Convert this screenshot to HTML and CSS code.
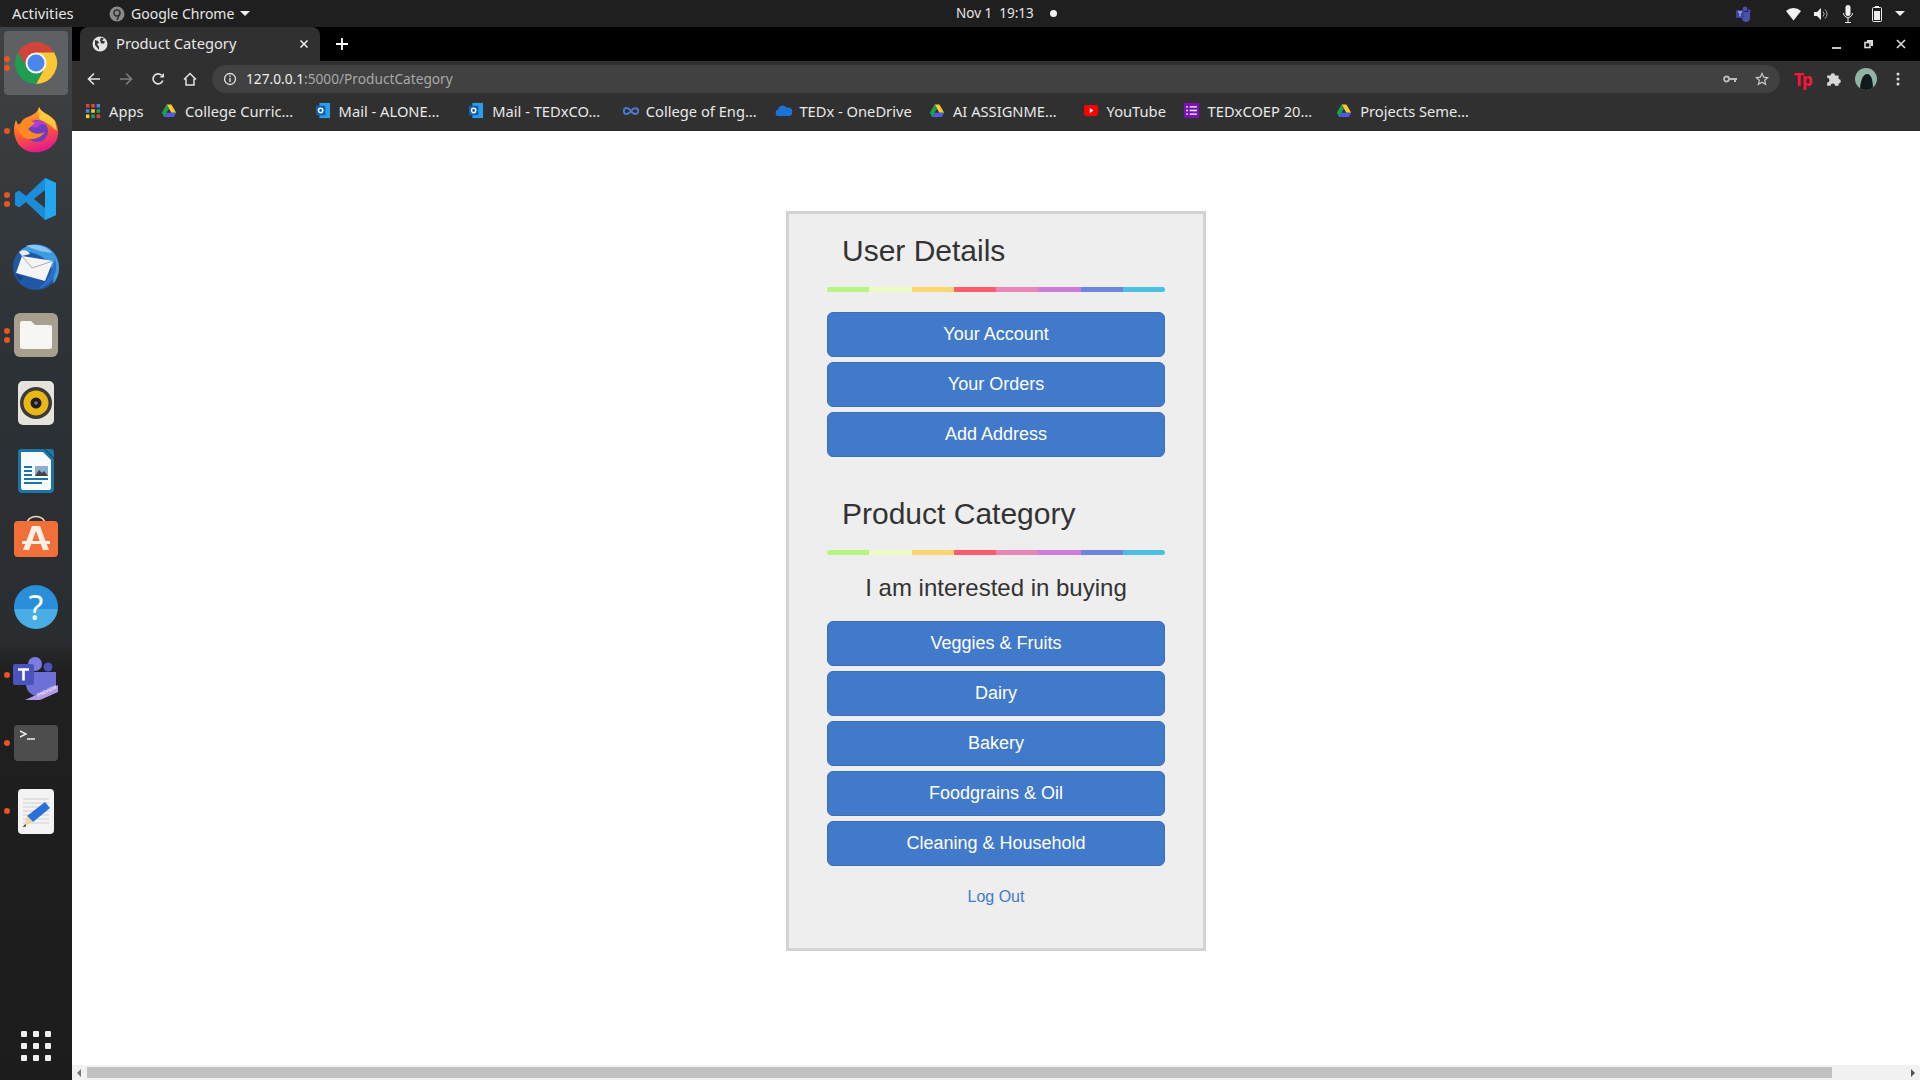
FILE: index.html
```html
<!DOCTYPE html>
<html lang="en">
<head>
    <meta charset="UTF-8">
    <title>Product Category</title>
    <link rel="stylesheet" href="styles.css">
</head>
<body>
    <!-- Ubuntu top bar -->
    <header class="topbar">
        <div class="topbar-left">
            <span class="activities">Activities</span>
            <span class="app-menu">
                <svg class="app-icon" width="16" height="16" viewBox="0 0 16 16"><circle cx="8" cy="8" r="7.5" fill="#8a8a8a"/><circle cx="8" cy="7" r="3" fill="none" stroke="#333" stroke-width="1.6"/><path d="M10.5 8 8 14" stroke="#333" stroke-width="1.6"/></svg>
                Google Chrome
                <i class="caret"></i>
            </span>
        </div>
        <div class="clock">Nov 1&nbsp; 19:13 <i class="clock-dot"></i></div>
        <div class="tray">
            <svg class="tray-teams" width="16" height="16" viewBox="0 0 16 16"><circle cx="10" cy="3" r="2.4" fill="#4a4fb0"/><circle cx="14" cy="5" r="1.8" fill="#3f44a0"/><path d="M6 6h9v5a4 4 0 0 1-8 2z" fill="#4a4fb0"/><rect x="1" y="4" width="8" height="8" rx="1" fill="#3f44a0"/><path d="M3 6h4M5 6v4.5" stroke="#ccd"/></svg>
            <svg class="tray-wifi" width="15" height="14" viewBox="0 0 15 14"><path d="M0 4a11 11 0 0 1 15 0L7.500 13.500z" fill="#f4f4f4"/></svg>
            <svg class="tray-sound" width="14" height="14" viewBox="0 0 14 14"><path d="M0 5h3l4-4v12l-4-4H0z" fill="#eee"/><path d="M9 4.500a3.500 3.500 0 0 1 0 5M11 2.500a6 6 0 0 1 0 9" fill="none" stroke="#aaa"/></svg>
            <svg class="tray-mic" width="12" height="18" viewBox="0 0 12 18"><rect x="3.500" y="0" width="5" height="11" rx="2.500" fill="#f2f2f2"/><path d="M1.500 8a4.500 4.500 0 0 0 9 0M6 13v4M3 17.500h6" fill="none" stroke="#f2f2f2"/></svg>
            <svg class="tray-battery" width="10" height="16" viewBox="0 0 10 16"><rect x="3" y="0" width="4" height="2" fill="#eee"/><rect x="0.500" y="1.500" width="9" height="14" rx="1" fill="none" stroke="#eee"/><rect x="2" y="5" width="6" height="9" fill="#eee"/></svg>
            <i class="caret"></i>
        </div>
    </header>

    <div class="desktop">
        <!-- Dock -->
        <aside class="dock">
            <div class="dock-item active">
                <span class="pips"><i></i><i></i></span>
                <svg width="44" height="44" viewBox="0 0 44 44"><path d="M3.900 11.500A21 21 0 0 1 40.200 11.500H22L13.300 27z" fill="#d2443a"/><path d="M40.200 11.500A21 21 0 0 1 22 43L30.700 27 22 11.500z" fill="#fbc735"/><path d="M22 43A21 21 0 0 1 3.900 11.500L13.300 27H30.700z" fill="#1f9e52"/><circle cx="22" cy="22" r="10.500" fill="#f4f4f4"/><circle cx="22" cy="22" r="8.500" fill="#4a86ec"/></svg>
            </div>
            <div class="dock-item">
                <span class="pips"><i></i></span>
                <svg class="icon-firefox" width="46" height="46" viewBox="0 0 46 46"><defs><linearGradient id="fx" x1="0.200" y1="0" x2="0.500" y2="1"><stop offset="0" stop-color="#ffb52e"/><stop offset="0.550" stop-color="#ff5e30"/><stop offset="1" stop-color="#e5198c"/></linearGradient></defs><path d="M26 0c2 6 11 7 16 14 5 8 4 19-2 24-8 9-25 10-33 1C0 31 0 20 3 13c1 3 2 5 4 6 1-5 4-8 8-9 4-2 10-4 11-10z" fill="url(#fx)"/><path d="M26 0c2 6 11 7 16 14l2 10c-6-5-10-9-17-11C25 9 25 4 26 0z" fill="#ffc83a"/><circle cx="24" cy="24" r="11" fill="#6d3ec1"/><path d="M14 19c5-7 16-7 21 0-6-3-9-1-11 2z" fill="#b23bd0"/><path d="M3 20c5-6 14-8 19-4l-7 6c4 5 11 6 17 3-5 7-16 10-23 4z" fill="#ff8a1f"/></svg>
            </div>
            <div class="dock-item">
                <span class="pips"><i></i><i></i></span>
                <svg width="44" height="44" viewBox="0 0 44 44"><path d="M31 1 42 6v32l-11 5-19-18-7 5.500L1 28v-12l4-2.500 7 5.500zM31 13 20 22l11 9z" fill="#1b8cd8"/><path d="M31 1 42 6v32l-11 5z" fill="#25a7f0"/></svg>
            </div>
            <div class="dock-item">
                <svg width="48" height="48" viewBox="0 0 48 48"><circle cx="24" cy="24" r="23" fill="#2058a8"/><path d="M8 8C18-2 38 0 45 15c4 10 2 19-4 26 1-9 0-17-6-23C28 11 18 8 8 8z" fill="#3f9be0"/><path d="M14 3c8-3 20-1 26 7l-12-2c-5-2-10-3-14-5z" fill="#8cc6ee"/><path d="M7 9c4-3 9-2 11 2l-8 2z" fill="#e8f0f6"/><path d="M10 13 41 18 33 38 4 30z" fill="#f4f4f4"/><path d="M10 13 20 25 41 18" fill="none" stroke="#99a" stroke-width="0.800"/><path d="M43 16c3 9 0 19-6 24-3 3-7 5-11 6 4-4 8-6 10-11 3-5 5-12 7-19z" fill="#2c6fc6"/><path d="M4 30 12 35 7 38C5 36 4 33 4 30z" fill="#1a4688"/></svg>
            </div>
            <div class="dock-item">
                <span class="pips"><i></i><i></i></span>
                <svg width="44" height="44" viewBox="0 0 44 44"><rect width="44" height="44" rx="6" fill="#a8a08f"/><path d="M6 10a2 2 0 0 1 2-2h9l4 4h15a2 2 0 0 1 2 2v20a2 2 0 0 1-2 2H8a2 2 0 0 1-2-2z" fill="#f8f6f3"/></svg>
            </div>
            <div class="dock-item">
                <svg width="36" height="44" viewBox="0 0 36 44"><rect width="36" height="44" rx="5" fill="#e6e3dc"/><circle cx="18" cy="22" r="16" fill="#3a3a3a"/><circle cx="18" cy="22" r="12.500" fill="#e9b816"/><circle cx="18" cy="22" r="5.500" fill="#1e1e1e"/><circle cx="18" cy="22" r="1.800" fill="#777"/></svg>
            </div>
            <div class="dock-item">
                <svg width="36" height="44" viewBox="0 0 36 44"><path d="M3 0h23l10 10v30a4 4 0 0 1-4 4H4a4 4 0 0 1-4-4V3a3 3 0 0 1 3-3z" fill="#1b75a8"/><path d="M3 3h22l8 8v28a2 2 0 0 1-2 2H5a2 2 0 0 1-2-2z" fill="#f7fbfd"/><path d="M27 0h6a3 3 0 0 1 3 3v6z" fill="#1b75a8"/><path d="M6 18h8M6 22h8M6 26h8M6 30h24M6 34h18" stroke="#1b75a8" stroke-width="2"/><rect x="17" y="17" width="13" height="10" fill="#8bb0cf"/><path d="M17 27l4-6 3 3 2-2 4 5z" fill="#444"/></svg>
            </div>
            <div class="dock-item">
                <svg width="44" height="48" viewBox="0 0 44 48"><path d="M13 9C13-1 31-1 31 9" fill="none" stroke="#e9d7b8" stroke-width="1.500"/><rect y="6" width="44" height="36" rx="4" fill="#f1703a"/><path d="M18 11h8l9 24h-6l-7-19-7 19H9z" fill="#fbeee6"/><path d="M8 26h28v3H8z" fill="#fbeee6"/></svg>
            </div>
            <div class="dock-item">
                <span class="help-icon">?</span>
            </div>
            <div class="dock-item">
                <span class="pips"><i></i></span>
                <svg class="icon-teams" width="48" height="44" viewBox="0 0 48 44"><circle cx="23" cy="8" r="7" fill="#7b7de0"/><circle cx="36" cy="11" r="4.500" fill="#4c52bc"/><path d="M14 16h30v12a12 12 0 0 1-12 12h-6a12 12 0 0 1-12-12z" fill="#6e70d8"/><rect x="1" y="8" width="21" height="21" rx="2" fill="#4b53bc"/><path d="M6 13.500h11M11.500 13.500v11" stroke="#fff" stroke-width="2.600"/><path d="M13 44 46 29v7L28 44z" fill="#b39ae6"/><text class="preview-mark" x="26" y="41" transform="rotate(-25 26 41)">PREVIEW</text></svg>
            </div>
            <div class="dock-item">
                <span class="pips"><i></i></span>
                <svg width="44" height="36" viewBox="0 0 44 36"><rect width="44" height="36" rx="4" fill="#4d4d4d"/><path d="M6 6 12 9 6 12M13 14h8" fill="none" stroke="#eee" stroke-width="1.400"/></svg>
            </div>
            <div class="dock-item">
                <span class="pips"><i></i></span>
                <svg width="36" height="45" viewBox="0 0 36 45"><rect width="36" height="45" rx="4" fill="#f3f3f3"/><path d="M5 10h26M5 14h26M5 18h26M5 22h26M5 26h26M5 30h26M5 34h26" stroke="#cfcfcf"/><path d="M27 13 32 19 15 33 9 27z" fill="#2b6fd8"/><path d="M9 27 15 33 6 37z" fill="#f3d2a6"/><path d="M4.500 38 7.500 35 8 37.500z" fill="#333"/></svg>
            </div>
            <div class="app-grid">
                <i></i><i></i><i></i><i></i><i></i><i></i><i></i><i></i><i></i>
            </div>
        </aside>

        <!-- Chrome window -->
        <div class="browser">
            <div class="tabstrip">
                <div class="tab">
                    <svg width="16" height="16" viewBox="0 0 16 16"><circle cx="8" cy="8" r="7.500" fill="#e4e4e4"/><path d="M3 4l3 1 1 2-2 1 2 3v3L3 9zM9 1.500l3 1-2 2 3 1-1 2h-3L8 4z" fill="#353535"/></svg>
                    <span class="tab-title">Product Category</span>
                    <svg class="tab-close" width="10" height="10" viewBox="0 0 10 10"><path d="M1.500 1.500l7 7M8.500 1.500l-7 7" stroke="#eee" stroke-width="1.500"/></svg>
                </div>
                <svg class="new-tab" width="12" height="12" viewBox="0 0 12 12"><path d="M6 0v12M0 6h12" stroke="#fff" stroke-width="1.800"/></svg>
                <div class="window-controls">
                    <svg width="10" height="10" viewBox="0 0 10 10"><path d="M0 9h9" stroke="#ddd" stroke-width="1.800"/></svg>
                    <svg width="10" height="10" viewBox="0 0 10 10"><path d="M3 1h6v6H7V3H3z" fill="#ddd"/><rect x="1" y="3.500" width="5" height="5" fill="none" stroke="#ddd" stroke-width="1.600"/></svg>
                    <svg width="10" height="10" viewBox="0 0 10 10"><path d="M1 1l8 8M9 1l-8 8" stroke="#ddd" stroke-width="1.600"/></svg>
                </div>
            </div>

            <div class="toolbar">
                <svg class="nav-icon" width="14" height="14" viewBox="0 0 14 14"><path d="M13 7H2M7 1.500 1.500 7 7 12.500" fill="none" stroke="#e2e2e2" stroke-width="1.600"/></svg>
                <svg class="nav-icon" width="14" height="14" viewBox="0 0 14 14"><path d="M1 7h11M7 1.500 12.500 7 7 12.500" fill="none" stroke="#7e7e7e" stroke-width="1.600"/></svg>
                <svg class="nav-icon" width="14" height="14" viewBox="0 0 14 14"><path d="M11.800 8.500A5 5 0 1 1 10.500 3.200" fill="none" stroke="#e2e2e2" stroke-width="1.600"/><path d="M8.500 5.500H13V1z" fill="#e2e2e2"/></svg>
                <svg class="nav-icon" width="14" height="14" viewBox="0 0 14 14"><path d="M1 7.500 7 1.500l6 6M3 6.500V13h8V6.500" fill="none" stroke="#e2e2e2" stroke-width="1.500"/></svg>
                <div class="omnibox">
                    <svg width="14" height="14" viewBox="0 0 14 14"><circle cx="7" cy="7" r="5.500" fill="none" stroke="#e2e2e2" stroke-width="1.300"/><path d="M7 6v4M7 3.500v1.500" stroke="#e2e2e2" stroke-width="1.400"/></svg>
                    <span class="url"><b>127.0.0.1</b>:5000/ProductCategory</span>
                    <svg class="omni-key" width="14" height="10" viewBox="0 0 14 10"><circle cx="3.500" cy="5" r="2.500" fill="none" stroke="#bbb" stroke-width="1.800"/><path d="M6 4h8v2h-1v2h-2V6H6z" fill="#bbb"/></svg>
                    <svg class="omni-star" width="14" height="14" viewBox="0 0 14 14"><path d="M7 1.500 8.700 5.200l4 .4-3 2.700.9 4L7 10.200l-3.600 2.100.9-4-3-2.700 4-.4z" fill="none" stroke="#ccc" stroke-width="1.200"/></svg>
                </div>
                <div class="toolbar-right">
                    <span class="tp-badge">Tp</span>
                    <svg class="ext-puzzle" width="16" height="16" viewBox="0 0 14 14"><path d="M1 4h3a2 2 0 0 1 4 0h3v3a2 2 0 0 1 0 4v2H8a2 2 0 0 0-4 0H1v-3a2 2 0 0 0 0-4z" fill="#d8d8d8"/></svg>
                    <svg class="profile" width="22" height="22" viewBox="0 0 22 22"><defs><clipPath id="avatar"><circle cx="11" cy="11" r="11"/></clipPath></defs><g clip-path="url(#avatar)"><rect width="22" height="22" fill="#8fb3a5"/><path d="M5 22c0-6 2-16 7-16s6 8 6 16z" fill="#10191c"/></g></svg>
                    <svg class="chrome-menu" width="4" height="14" viewBox="0 0 4 14"><circle cx="2" cy="2" r="1.500" fill="#ddd"/><circle cx="2" cy="7" r="1.500" fill="#ddd"/><circle cx="2" cy="12" r="1.500" fill="#ddd"/></svg>
                </div>
            </div>

            <nav class="bookmarks">
                <a class="bookmark bm-apps"><svg width="12" height="12" viewBox="0 0 12 12"><path d="M0 0h3v3H0z" fill="#e0433a"/><path d="M4.500 0h3v3h-3z" fill="#e0433a"/><path d="M9 0h3v3H9z" fill="#4a86ec"/><path d="M0 4.500h3v3H0z" fill="#4a86ec"/><path d="M4.500 4.500h3v3h-3z" fill="#fbc735"/><path d="M9 4.500h3v3H9z" fill="#1f9e52"/><path d="M0 9h3v3H0z" fill="#fbc735"/><path d="M4.500 9h3v3h-3z" fill="#1f9e52"/><path d="M9 9h3v3H9z" fill="#e0433a"/></svg>Apps</a>
                <a class="bookmark bm-wide"><svg width="12" height="12" viewBox="0 0 12 12"><path d="M4 .500h4l4 7H8z" fill="#fbc735"/><path d="M4 .500 0 7.500l2 3.500 4-7z" fill="#1f9e52"/><path d="M2 11h8l2-3.500H4z" fill="#4a5fe0"/></svg>College Curric…</a>
                <a class="bookmark bm-wide"><svg width="12" height="13" viewBox="0 0 12 13"><rect x="3" y="0" width="9" height="13" fill="#2b9ee8"/><rect x="0" y="2.500" width="8" height="8" fill="#0f5fb8"/><circle cx="4" cy="6.500" r="1.800" fill="none" stroke="#fff" stroke-width="1.200"/></svg>Mail - ALONE…</a>
                <a class="bookmark bm-wide"><svg width="12" height="13" viewBox="0 0 12 13"><rect x="3" y="0" width="9" height="13" fill="#2b9ee8"/><rect x="0" y="2.500" width="8" height="8" fill="#0f5fb8"/><circle cx="4" cy="6.500" r="1.800" fill="none" stroke="#fff" stroke-width="1.200"/></svg>Mail - TEDxCO…</a>
                <a class="bookmark bm-wide bm-small-gap"><svg width="14" height="8" viewBox="0 0 14 8"><path d="M7 4C5 1 1 .500 1 4s4 3 6 0 6-3 6 0-4 3.500-6 0" fill="none" stroke="#4a7bd0" stroke-width="1.600"/></svg>College of Eng…</a>
                <a class="bookmark bm-wide bm-small-gap"><svg width="14" height="9" viewBox="0 0 14 9"><path d="M2.500 9a2.500 2.500 0 0 1-.5-5 4 4 0 0 1 7.500-1.500A3 3 0 0 1 13.800 6 3 3 0 0 1 11.500 9z" fill="#1a74d8"/></svg>TEDx - OneDrive</a>
                <a class="bookmark bm-wide"><svg width="12" height="12" viewBox="0 0 12 12"><path d="M4 .500h4l4 7H8z" fill="#fbc735"/><path d="M4 .500 0 7.500l2 3.500 4-7z" fill="#1f9e52"/><path d="M2 11h8l2-3.500H4z" fill="#4a5fe0"/></svg>AI ASSIGNME…</a>
                <a class="bookmark bm-yt"><svg width="12" height="9" viewBox="0 0 12 9"><rect width="12" height="9" rx="2" fill="#f00"/><path d="M5 2.500 8 4.500 5 6.500z" fill="#fff"/></svg>YouTube</a>
                <a class="bookmark bm-wide"><svg width="13" height="13" viewBox="0 0 13 13"><rect width="13" height="13" fill="#7b10b5"/><path d="M5 3.500h6M5 6.500h6M5 9.500h6M2 3.500h1.500M2 6.500h1.500M2 9.500h1.500" stroke="#fff" stroke-width="1.200"/></svg>TEDxCOEP 20…</a>
                <a class="bookmark"><svg width="12" height="12" viewBox="0 0 12 12"><path d="M4 .500h4l4 7H8z" fill="#fbc735"/><path d="M4 .500 0 7.500l2 3.500 4-7z" fill="#1f9e52"/><path d="M2 11h8l2-3.500H4z" fill="#4a5fe0"/></svg>Projects Seme…</a>
            </nav>

            <main class="page">
                <div class="user-card">
                    <h3 class="section-title">User Details</h3>
                    <div class="rainbow"><i></i><i></i><i></i><i></i><i></i><i></i><i></i><i></i></div>
                    <div class="btn-stack">
                        <button class="btn-blue">Your Account</button>
                        <button class="btn-blue">Your Orders</button>
                        <button class="btn-blue">Add Address</button>
                    </div>

                    <h3 class="section-title second">Product Category</h3>
                    <div class="rainbow"><i></i><i></i><i></i><i></i><i></i><i></i><i></i><i></i></div>
                    <p class="lead">I am interested in buying</p>
                    <div class="btn-stack">
                        <button class="btn-blue">Veggies &amp; Fruits</button>
                        <button class="btn-blue">Dairy</button>
                        <button class="btn-blue">Bakery</button>
                        <button class="btn-blue">Foodgrains &amp; Oil</button>
                        <button class="btn-blue">Cleaning &amp; Household</button>
                    </div>
                    <a class="logout" href="#">Log Out</a>
                </div>
            </main>

            <div class="hscroll">
                <i class="arrow-left"></i>
                <div class="hscroll-track"><div class="hscroll-thumb"></div></div>
                <i class="arrow-right"></i>
            </div>
        </div>
    </div>
</body>
</html>
```

FILE: styles.css
```css
* {
    box-sizing: border-box;
}

body {
    margin: 0;
    height: 100vh;
    overflow: hidden;
    display: flex;
    flex-direction: column;
    font-family: "Noto Sans", sans-serif;
    background: #fff;
}

/* Top bar */
.topbar {
    height: 27px;
    flex: none;
    background: #1f1f1f;
    color: #e6e6e6;
    font-size: 14px;
    display: flex;
    align-items: center;
    position: relative;
}

.topbar-left {
    display: flex;
    align-items: center;
    padding-left: 12px;
}

.activities {
    width: 97px;
    font-size: 14.8px;
    margin-bottom: 2px;
}

.app-menu {
    display: flex;
    align-items: center;
    gap: 6px;
}

.caret {
    display: inline-block;
    border-left: 5px solid transparent;
    border-right: 5px solid transparent;
    border-top: 5px solid #eee;
}

.clock {
    position: absolute;
    left: 956px;
    top: 4px;
    font-size: 13.5px;
    line-height: 18px;
    display: flex;
    align-items: center;
    gap: 16px;
}

.clock-dot {
    width: 7px;
    height: 7px;
    border-radius: 50%;
    background: #f0f0f0;
}

.tray {
    margin-left: auto;
    display: flex;
    align-items: center;
    padding-right: 15px;
}

.tray-teams { margin-right: 35px; }
.tray-wifi { margin-right: 13px; }
.tray-sound { margin-right: 14px; }
.tray-mic { margin-right: 18px; }
.tray-battery { margin-right: 13px; }

/* Dock */
.desktop {
    flex: 1;
    display: flex;
    min-height: 0;
}

.dock {
    width: 72px;
    flex: none;
    background: linear-gradient(#3f4244, #2d3236 30%, #2a2d30 58%, #202020 61%, #1c1c1c);
    display: flex;
    flex-direction: column;
    align-items: center;
    position: relative;
    padding-top: 4px;
}

.dock-item {
    width: 64px;
    height: 64px;
    margin-bottom: 4px;
    display: flex;
    align-items: center;
    justify-content: center;
    position: relative;
    border-radius: 4px;
}

.dock-item.active {
    background: #5d6163;
}

.icon-firefox {
    margin-bottom: 2px;
}

.icon-teams {
    margin-top: 5px;
}

.pips {
    position: absolute;
    left: 0;
    top: 0;
    bottom: 0;
    display: flex;
    flex-direction: column;
    justify-content: center;
    gap: 3px;
}

.pips i {
    width: 6px;
    height: 6px;
    border-radius: 50%;
    background: #e95420;
}

.help-icon {
    width: 44px;
    height: 44px;
    border-radius: 50%;
    background: linear-gradient(#2a8fdb 55%, #4aaee6 55%);
    color: #fff;
    font-size: 34px;
    line-height: 44px;
    text-align: center;
}

.preview-mark {
    font-family: "Noto Sans", sans-serif;
    font-size: 5px;
    fill: #fff;
}

.app-grid {
    position: absolute;
    left: 21px;
    bottom: 19px;
    display: grid;
    grid-template-columns: repeat(3, 6px);
    gap: 6px;
}

.app-grid i {
    height: 6px;
    background: #eee;
    border-radius: 1px;
}

/* Chrome window */
.browser {
    flex: 1;
    min-width: 0;
    display: flex;
    flex-direction: column;
}

.tabstrip {
    height: 34px;
    flex: none;
    background: #000;
    display: flex;
    align-items: flex-end;
    padding-left: 8px;
}

.tab {
    width: 240px;
    height: 34px;
    background: #303030;
    border-radius: 8px 8px 0 0;
    color: #e8e8e8;
    font-size: 14.7px;
    display: flex;
    align-items: center;
    padding: 0 11px 0 12px;
    gap: 8px;
}

.tab-title {
    margin-bottom: 2px;
}

.tab-close {
    margin-left: auto;
}

.new-tab {
    margin: 0 0 11px 16px;
}

.window-controls {
    margin-left: auto;
    display: flex;
    gap: 22px;
    padding: 0 14px 12px 0;
}

.toolbar {
    height: 36px;
    flex: none;
    background: #303030;
    display: flex;
    align-items: center;
    padding-left: 15px;
}

.nav-icon {
    margin-right: 18px;
}

.omnibox {
    width: 1568px;
    height: 28px;
    margin-left: -3px;
    background: #414141;
    border-radius: 14px;
    display: flex;
    align-items: center;
    padding: 0 11px;
    gap: 9px;
    flex: none;
}

.url {
    color: #a8a8a8;
    font-size: 13.7px;
    margin-bottom: 2px;
}

.url b {
    color: #eee;
    font-weight: 400;
}

.omni-key {
    margin-left: auto;
}

.omni-star {
    margin-left: 9px;
}

.toolbar-right {
    display: flex;
    align-items: center;
    flex: 1;
    padding-left: 14px;
}

.tp-badge {
    color: #ff1439;
    font-weight: 700;
    font-size: 17px;
    width: 16px;
    letter-spacing: -1px;
}

.ext-puzzle { margin-left: 16px; }
.profile { margin-left: 13px; }
.chrome-menu { margin-left: 19px; }

.bookmarks {
    height: 34px;
    flex: none;
    background: #303030;
    border-bottom: 1px solid #2a2a2a;
    display: flex;
    align-items: center;
    padding: 0 0 4px 15px;
    color: #e8e8e8;
    font-size: 14.7px;
}

.bookmark {
    display: flex;
    align-items: center;
    white-space: nowrap;
    line-height: 18px;
    padding-bottom: 2px;
}

.bookmark svg {
    margin-right: 10px;
    flex: none;
    transform: scale(1.2);
}

.bm-small-gap svg {
    margin-right: 8px;
}

.bm-apps { width: 76px; }
.bm-wide { width: 153.6px; }
.bm-yt { width: 100px; }

/* Page */
.page {
    flex: 1;
    min-height: 0;
    background: #fff;
    display: flex;
    justify-content: center;
    align-items: flex-start;
    padding-top: 80px;
    font-family: "Liberation Sans", Arial, sans-serif;
}

.user-card {
    width: 420px;
    height: 740px;
    border: 3px solid #d3d3d3;
    background: #eee;
    padding: 0 38px;
    color: #333;
    display: flex;
    flex-direction: column;
}

.section-title {
    margin: 0;
    font-size: 30px;
    font-weight: 500;
    line-height: 33px;
    padding: 20px 0 0 15px;
}

.section-title.second {
    padding-top: 40px;
}

.rainbow {
    height: 5px;
    margin-top: 20px;
    display: flex;
    border-radius: 3px;
    overflow: hidden;
    flex: none;
}

.rainbow i {
    flex: 1;
}

.rainbow i:nth-child(1) { background: #b5f581; }
.rainbow i:nth-child(2) { background: #eefbc5; }
.rainbow i:nth-child(3) { background: #fdd66e; }
.rainbow i:nth-child(4) { background: #fd5c6a; }
.rainbow i:nth-child(5) { background: #e985b8; }
.rainbow i:nth-child(6) { background: #cf7bdb; }
.rainbow i:nth-child(7) { background: #6d85dd; }
.rainbow i:nth-child(8) { background: #4cc0e4; }

.btn-stack {
    display: flex;
    flex-direction: column;
    gap: 5px;
    margin-top: 20px;
}

.btn-blue {
    height: 45px;
    background: #427ACB;
    border: 1px solid #3a6fb8;
    border-radius: 6px;
    color: #fff;
    font-family: inherit;
    font-size: 18px;
}

.lead {
    margin: 19px 0 0;
    font-size: 24px;
    line-height: 27px;
    text-align: center;
}

.logout {
    margin-top: 22px;
    text-align: center;
    color: #427ACB;
    font-size: 16px;
    line-height: 18px;
    text-decoration: none;
}

/* Fake scrollbar */
.hscroll {
    height: 15px;
    flex: none;
    background: #f1f1f1;
    display: flex;
    align-items: center;
}

.hscroll-track {
    flex: 1;
    height: 11px;
    padding-left: 6px;
}

.hscroll-thumb {
    width: 1745px;
    height: 11px;
    background: #c1c1c1;
}

.arrow-left,
.arrow-right {
    width: 0;
    height: 0;
    border-top: 4px solid transparent;
    border-bottom: 4px solid transparent;
}

.arrow-left {
    margin-left: 5px;
    border-right: 4px solid #777;
}

.arrow-right {
    margin-right: 5px;
    border-left: 4px solid #505050;
}
```
